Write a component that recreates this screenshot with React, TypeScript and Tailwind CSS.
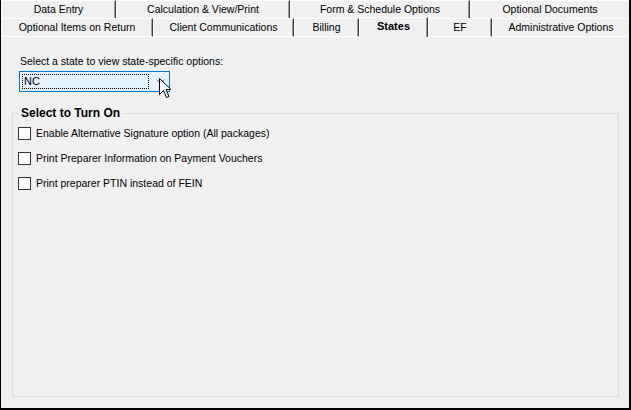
import React from 'react'

const font = { fontFamily: '"Liberation Sans", Arial, sans-serif' }

type TabProps = { label: string; w: string; last?: boolean; selected?: boolean; bottom?: boolean }

function Tab({ label, w, last, selected, bottom }: TabProps) {
  return (
    <div
      className={
        'flex items-center justify-center text-[10.5px] text-black border-t border-l border-white ' +
        (last ? 'flex-1 ' : w + ' ') +
        (last ? '' : 'border-r border-r-[#3c3c3c] shadow-[inset_-1px_0_#a0a0a0] ') +
        (selected
          ? 'h-[20px] -mt-px font-bold text-[11px] relative z-10 bg-[#f0f0f0] pb-[2px]'
          : bottom
            ? 'h-full border-b pt-px'
            : 'h-full pt-px')
      }
    >
      {label}
    </div>
  )
}

function Check({ label }: { label: string }) {
  return (
    <div className="flex items-center h-[13px]">
      <div className="w-[13px] h-[13px] border border-[#333333] bg-white" />
      <span className="ml-[5px] text-[10.5px] text-black leading-none">{label}</span>
    </div>
  )
}

export default function App() {
  return (
    <div className="w-[631px] h-[410px] bg-[#f0f0f0] relative overflow-hidden" style={font}>
      <div className="w-full h-full flex flex-col border-l border-black border-r-2 border-b-2">
        {/* Tab row 1 */}
        <div className="flex h-[18px]">
          <Tab label="Data Entry" w="w-[115px]" />
          <Tab label="Calculation & View/Print" w="w-[174px]" />
          <Tab label="Form & Schedule Options" w="w-[180px]" />
          <Tab label="Optional Documents" w="" last />
        </div>
        {/* Tab row 2 */}
        <div className="flex items-end h-[19px]">
          <Tab label="Optional Items on Return" w="w-[152px]" bottom />
          <Tab label="Client Communications" w="w-[141px]" bottom />
          <Tab label="Billing" w="w-[65px]" bottom />
          <Tab label="States" w="w-[69px]" selected />
          <Tab label="EF" w="w-[64px]" bottom />
          <Tab label="Administrative Options" w="" last bottom />
        </div>

        {/* Content */}
        <div className="flex-1 flex flex-col pt-[18px]">
          <div className="pl-[19px] text-[10.5px] text-black leading-[13px]">
            Select a state to view state-specific options:
          </div>
          <div className="ml-[18px] mt-[3px] w-[151px] h-[21px] border border-[#0078d7] bg-[#e5f1fb] p-[2px] flex relative">
            <div className="w-[127px] h-[15px] border border-dotted border-black text-[11px] leading-[13px] pl-px text-black">
              NC
            </div>
            <svg className="absolute left-[136px] top-[7px]" width="9" height="5" viewBox="0 0 9 5">
              <path d="M0.5 0.5 L4.5 4.5 L8.5 0.5" fill="none" stroke="#6d6d6d" strokeWidth="1" />
            </svg>
          </div>

          {/* Group box */}
          <div className="ml-[11px] mr-[10px] mt-[21px] mb-[11px] flex-1 border border-[#dcdcdc] relative pt-[13px] pl-[5px] flex flex-col gap-[12px]">
            <div className="absolute -top-[8px] left-[6px] bg-[#f0f0f0] px-[2px] text-[12px] font-bold leading-[14px] text-black">
              Select to Turn On
            </div>
            <Check label="Enable Alternative Signature option (All packages)" />
            <Check label="Print Preparer Information on Payment Vouchers" />
            <Check label="Print preparer PTIN instead of FEIN" />
          </div>
        </div>
      </div>

      {/* Mouse cursor */}
      <svg className="absolute left-[159px] top-[78px]" width="13" height="21" viewBox="0 0 13 21">
        <path
          d="M0.5 0.5 L0.5 16.5 L4.5 12.5 L7.5 19.5 L10 18.5 L7 11.5 L12 11.5 Z"
          fill="white"
          stroke="black"
          strokeWidth="1"
          strokeLinejoin="miter"
        />
      </svg>
    </div>
  )
}
